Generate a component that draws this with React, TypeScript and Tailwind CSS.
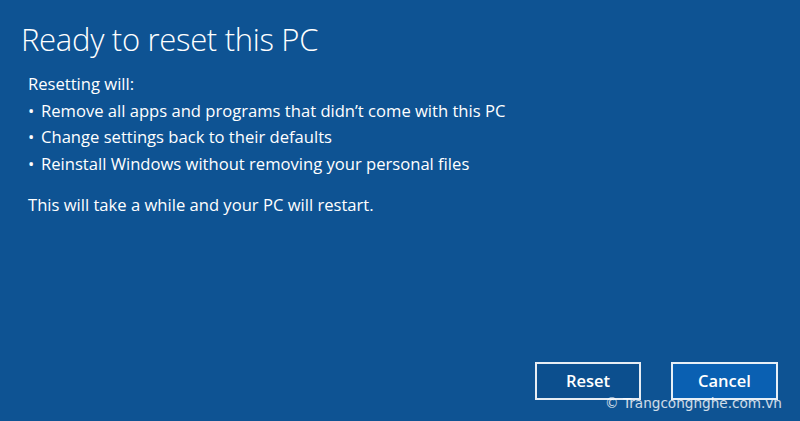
import React from 'react';

export default function App() {
  return (
    <div className="relative w-[800px] h-[421px] bg-[#0e5393] text-white flex flex-col overflow-hidden" style={{ fontFamily: '"Open Sans", "Noto Sans", sans-serif' }}>
      {/* Title */}
      <h1 className="pl-[21px] pt-[19px] text-[31px] font-light leading-[40px] tracking-[-0.3px]">Ready to reset this PC</h1>

      {/* Body */}
      <div className="pl-[28px] pt-[12px] text-[16.6px] leading-[26.6px]">
        <p>Resetting will:</p>
        <ul>
          <li className="flex">
            <span className="w-[13px]">•</span>Remove all apps and programs that didn’t come with this PC
          </li>
          <li className="flex">
            <span className="w-[13px]">•</span>Change settings back to their defaults
          </li>
          <li className="flex">
            <span className="w-[13px]">•</span>Reinstall Windows without removing your personal files
          </li>
        </ul>
        <p className="mt-[15px]">This will take a while and your PC will restart.</p>
      </div>

      <div className="flex-1" />

      {/* Buttons */}
      <div className="flex justify-end gap-[30px] pr-[22px] pb-[21px]">
        <button className="w-[106px] h-[38px] border-2 border-white/90 bg-[#0c4f8e] text-[16.5px] font-semibold">Reset</button>
        <button className="w-[107px] h-[38px] border-2 border-white/90 bg-[#0a60b2] text-[16.5px] font-semibold">Cancel</button>
      </div>

      {/* Watermark */}
      <div className="absolute left-[605px] top-[394px] whitespace-nowrap text-[13.6px] text-white/80 leading-[18px]" style={{ fontFamily: '"DejaVu Sans", sans-serif' }}>
        © Trangcongnghe.com.vn
      </div>
    </div>
  );
}
